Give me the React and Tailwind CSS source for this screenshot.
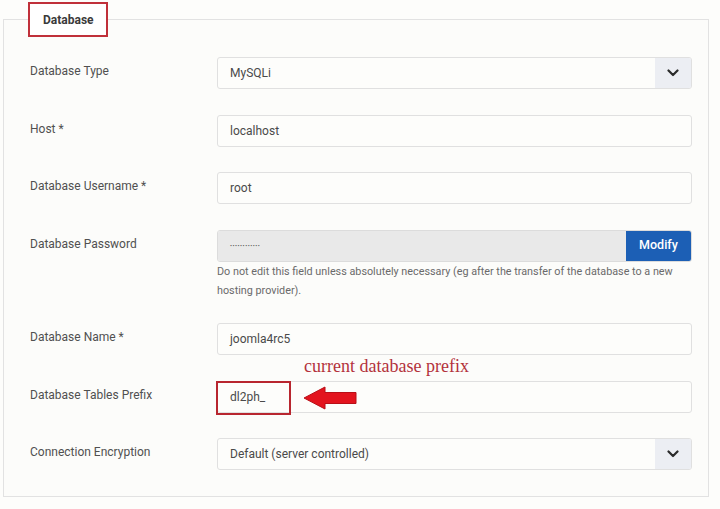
import React from 'react';

const Chevron = () => (
  <svg width="12" height="8" viewBox="0 0 12 8" fill="none">
    <path d="M1.5 1.5 L6 6 L10.5 1.5" stroke="#2b2b2b" strokeWidth="2.2" strokeLinecap="round" strokeLinejoin="round" />
  </svg>
);

const Label = ({ children }) => (
  <div className="w-[187px] shrink-0 pt-[6px] text-[12px] leading-[16px] text-[#505050]">{children}</div>
);

const TextInput = ({ value }) => (
  <div className="flex h-[32px] w-full items-center rounded-[3px] border border-[#e0e0e0] bg-[#fdfdfb] px-[12px] text-[12px] text-[#4a4a4a]">
    {value}
  </div>
);

const SelectInput = ({ value }) => (
  <div className="flex h-[32px] w-full items-stretch overflow-hidden rounded-[3px] border border-[#e0e0e0] bg-[#fdfdfb] text-[12px] text-[#4a4a4a]">
    <div className="flex flex-1 items-center px-[12px]">{value}</div>
    <div className="flex w-[36px] items-center justify-center bg-[#eceef3]">
      <Chevron />
    </div>
  </div>
);

const Row = ({ label, children }) => (
  <div className="flex items-start">
    <Label>{label}</Label>
    <div className="flex-1">{children}</div>
  </div>
);

export default function App() {
  return (
    <div className="min-h-screen bg-[#fdfdfb] font-['Roboto','Liberation_Sans',sans-serif]">
      <div className="pt-[2px] pl-[3px] pr-[11px]">
        <fieldset className="border border-[#e2e2e2] bg-[#fcfcfa] pl-[26px] pr-[16px] pb-[26px]">
          <legend className="ml-[-2px] flex h-[35px] w-[80px] items-center border-2 border-[#c0303a] bg-white pl-[13px] text-[12px] font-bold text-[#3a3a3a]">
            Database
          </legend>

          <div className="flex flex-col gap-[25.5px] pt-[20px]">
            <Row label="Database Type">
              <SelectInput value="MySQLi" />
            </Row>

            <Row label="Host *">
              <TextInput value="localhost" />
            </Row>

            <Row label="Database Username *">
              <TextInput value="root" />
            </Row>

            <Row label="Database Password">
              <div className="flex h-[32px] w-full overflow-hidden rounded-[3px] border border-[#dcdcdc]">
                <div className="flex flex-1 items-center bg-[#e9e9e9] px-[12px] text-[6px] tracking-[0.5px] text-[#555]">
                  ••••••••••••
                </div>
                <div className="flex w-[65px] items-center justify-center bg-[#1c5fb5] text-[12.5px] font-medium text-white">
                  Modify
                </div>
              </div>
              <p className="mb-[-2px] text-[10.8px] leading-[19px] text-[#6a6a6a]">
                Do not edit this field unless absolutely necessary (eg after the transfer of the database to a new
                <br />
                hosting provider).
              </p>
            </Row>

            <Row label="Database Name *">
              <TextInput value="joomla4rc5" />
            </Row>

            <Row label="Database Tables Prefix">
              <div className="relative">
                <TextInput value="dl2ph_" />
                {/* annotation overlay */}
                <div className="absolute left-[-1px] top-[0px] h-[34px] w-[75px] border-2 border-[#b8262f]" />
                <div className="absolute left-[87px] top-[-25px] whitespace-nowrap font-['Liberation_Serif',serif] text-[18px] leading-[20px] text-[#b3323c]">
                  current database prefix
                </div>
                <svg className="absolute left-[86px] top-[5px]" width="54" height="24" viewBox="0 0 54 24">
                  <path d="M1 12 L22 1 L22 6.5 L53 6.5 L53 17.5 L22 17.5 L22 23 Z" fill="#e3141e" stroke="#b80f17" strokeWidth="1" />
                </svg>
              </div>
            </Row>

            <Row label="Connection Encryption">
              <SelectInput value="Default (server controlled)" />
            </Row>
          </div>
        </fieldset>
      </div>
    </div>
  );
}
